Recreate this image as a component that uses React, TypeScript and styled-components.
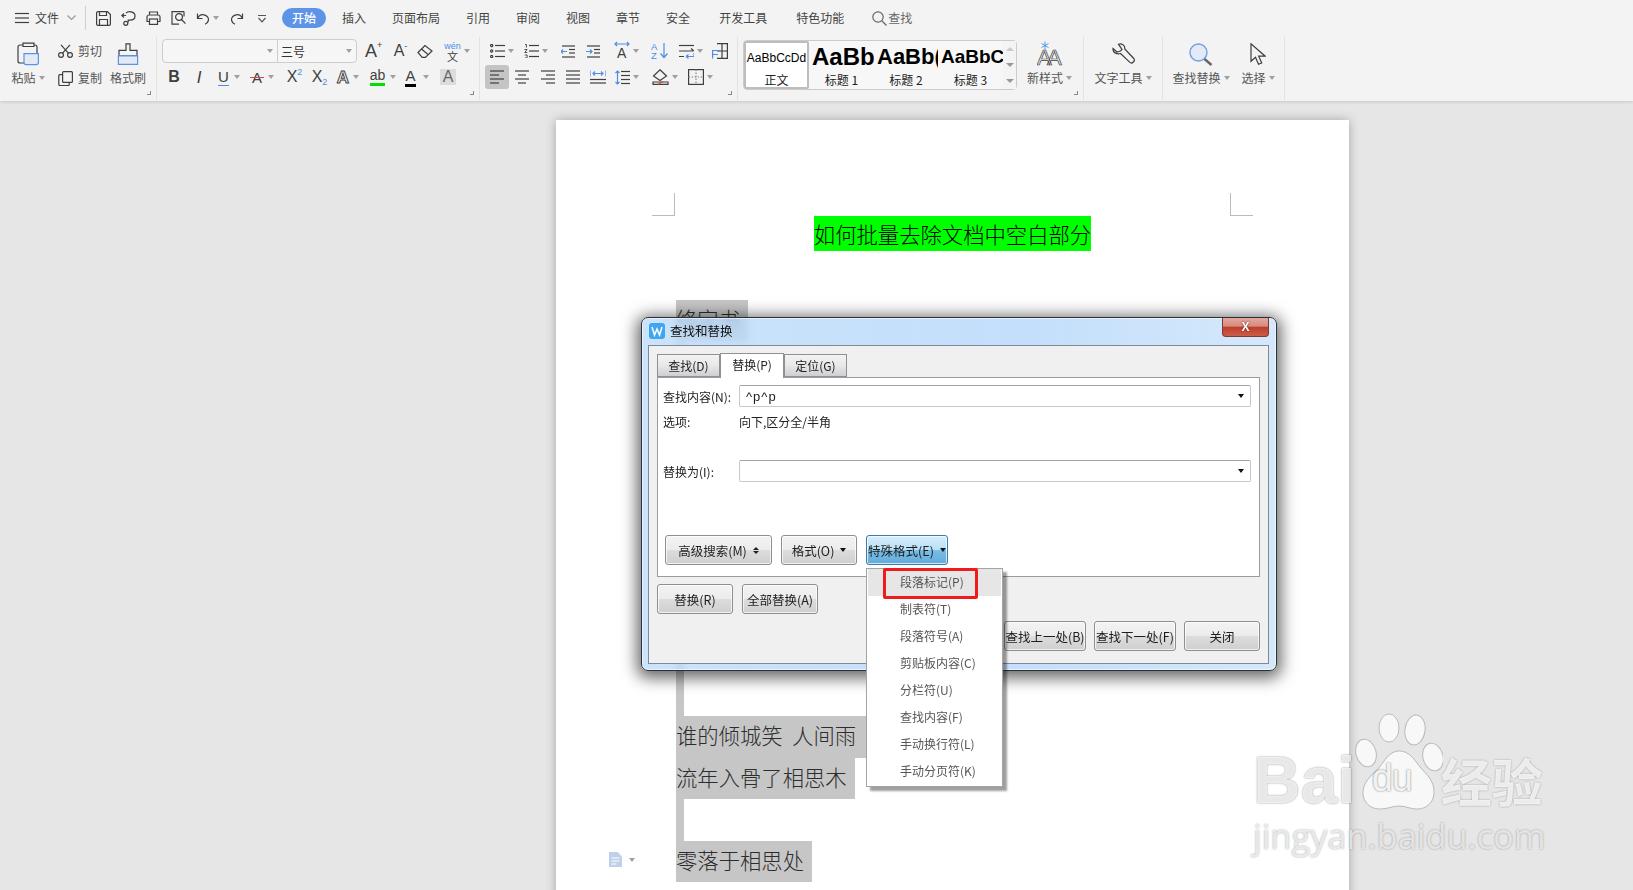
import React from 'react'
import styled, { createGlobalStyle } from 'styled-components'

const UI_FONT = `"Noto Sans CJK SC", "Liberation Sans", sans-serif`
const LATIN = `"Liberation Sans", "Noto Sans CJK SC", sans-serif`
const INK = '#3f3f3f'
const BLUE = '#4f8de6'

const GlobalStyle = createGlobalStyle`
  html, body { margin: 0; padding: 0; height: 100%; overflow: hidden; }
  body { font-family: ${UI_FONT}; font-size: 12px; color: #444; }
  #root { height: 100%; }
  * { box-sizing: border-box; }
`

const Stage = styled.div`
  position: relative;
  height: 100vh;
  display: flex;
  flex-direction: column;
  overflow: hidden;
  background: #e6e6e6;
`

const Ribbon = styled.header`
  flex: none;
  height: 101px;
  background: #f3f3f3;
  box-shadow: 0 1px 3px rgba(0, 0, 0, 0.14);
  position: relative;
  z-index: 2;
`

const TopBar = styled.div`
  height: 36px;
  display: flex;
  align-items: center;
  padding-left: 15px;
`

const FileLabel = styled.span`
  margin: 0 8px 0 6px;
  line-height: 16px;
`

const TopSeparator = styled.i`
  width: 1px;
  height: 24px;
  background: #cfcfcf;
  margin: 0 5px 0 9px;
`

const Pill = styled.span`
  width: 44px;
  height: 20px;
  margin-left: 8px;
  border-radius: 10px;
  background: #5d94e8;
  color: #fff;
  font-weight: 500;
  text-align: center;
  line-height: 20px;
`

const NavItem = styled.span<{ $ml?: number; $muted?: boolean }>`
  margin-left: ${(p) => p.$ml ?? 26}px;
  color: ${(p) => (p.$muted ? '#666' : '#444')};
  white-space: nowrap;
  line-height: 16px;
`

const SearchIcon = styled.span`
  display: flex;
  margin-left: 28px;
  margin-right: 1px;
`

const Tool = styled.span<{ $w: number; $active?: boolean }>`
  flex: none;
  width: ${(p) => p.$w}px;
  height: 24px;
  display: flex;
  align-items: center;
  justify-content: center;
  border-radius: 3px;
  background: ${(p) => (p.$active ? '#c4c4c4' : 'transparent')};
`

const Caret = styled.i<{ $gap?: number }>`
  flex: none;
  display: inline-block;
  width: 0;
  height: 0;
  margin-left: ${(p) => p.$gap ?? 3}px;
  border-style: solid;
  border-width: 4px 3px 0;
  border-color: #a0a0a0 transparent transparent;
  vertical-align: middle;
`

const Tools = styled.div`
  height: 65px;
  display: flex;
`

const Group = styled.section<{ $w: number; $pad?: number }>`
  position: relative;
  flex: none;
  width: ${(p) => p.$w}px;
  height: 63px;
  margin-top: 1px;
  padding: 2px 0 0 ${(p) => p.$pad ?? 0}px;
  border-right: 1px solid #e2e2e2;
  display: flex;
`

const Launcher = styled.i`
  position: absolute;
  right: 5px;
  bottom: 5px;
  width: 4px;
  height: 4px;
  border-right: 1px solid #888;
  border-bottom: 1px solid #888;
`

const Stack = styled.div`
  display: flex;
  flex-direction: column;
  gap: 2px;
`

const Row = styled.div`
  height: 24px;
  display: flex;
  align-items: center;
`

const BigButton = styled.div<{ $w: number }>`
  flex: none;
  width: ${(p) => p.$w}px;
  padding-top: 3px;
  display: flex;
  flex-direction: column;
  align-items: center;
`

const BigIcon = styled.span`
  height: 24px;
  display: flex;
  align-items: center;
  justify-content: center;
`

const BigLabel = styled.span`
  margin-top: 4px;
  display: flex;
  align-items: center;
  line-height: 16px;
  color: #555;
  white-space: nowrap;
`

const SmallColumn = styled.div`
  flex: none;
  width: 60px;
  padding: 5px 0 0 10px;
  display: flex;
  flex-direction: column;
  gap: 13px;
`

const SmallButton = styled.div`
  height: 14px;
  display: flex;
  align-items: center;
  gap: 5px;
  color: #555;
  line-height: 14px;
`

const Combo = styled.div`
  flex: none;
  width: 195px;
  height: 24px;
  border: 1px solid #cdcdcd;
  border-radius: 4px;
  background: #f6f6f6;
  display: flex;
`

const ComboPart = styled.div<{ $w: number; $divider?: boolean }>`
  width: ${(p) => p.$w}px;
  display: flex;
  align-items: center;
  justify-content: space-between;
  padding: 0 4px 0 3px;
  border-right: ${(p) => (p.$divider ? '1px solid #cdcdcd' : 'none')};
  color: #333;
`

const Letter = styled.span<{ $size?: number; $weight?: number; $color?: string; $italic?: boolean }>`
  position: relative;
  display: inline-block;
  font-family: ${LATIN};
  font-size: ${(p) => p.$size ?? 16}px;
  font-weight: ${(p) => p.$weight ?? 400};
  font-style: ${(p) => (p.$italic ? 'italic' : 'normal')};
  color: ${(p) => p.$color ?? INK};
  line-height: 1;
`

const SuperMark = styled.sup<{ $blue?: boolean; $low?: boolean }>`
  position: absolute;
  left: 100%;
  top: ${(p) => (p.$low ? 'auto' : '-2px')};
  bottom: ${(p) => (p.$low ? '-2px' : 'auto')};
  font-size: 9px;
  line-height: 10px;
  color: ${(p) => (p.$blue ? BLUE : INK)};
`

const UnderLetter = styled(Letter)`
  padding-bottom: 1px;
  border-bottom: 1px solid ${BLUE};
`

const StruckLetter = styled(Letter)`
  &::after {
    content: '';
    position: absolute;
    left: -2px;
    right: -2px;
    top: 7px;
    height: 1px;
    background: #d9453d;
  }
`

const OutlineLetter = styled(Letter)`
  color: #fff;
  -webkit-text-stroke: 1px ${INK};
  font-weight: 700;
`

const BarLetter = styled(Letter)<{ $bar: string }>`
  padding-bottom: 1px;
  border-bottom: 3px solid ${(p) => p.$bar};
`

const ShadedLetter = styled(Letter)`
  width: 16px;
  height: 16px;
  background: #dcdcdc;
  color: #666;
  text-align: center;
`

const WenMark = styled.span`
  display: flex;
  flex-direction: column;
  align-items: center;
  font-family: ${LATIN};
  font-size: 9px;
  line-height: 9px;
  color: ${BLUE};
`

const WenChar = styled.span`
  font-family: ${UI_FONT};
  font-size: 11px;
  line-height: 10px;
  color: ${INK};
`

const Gallery = styled.div`
  flex: none;
  width: 274px;
  height: 50px;
  margin: 1px 8px 0 5px;
  border: 1px solid #cbcbcb;
  border-radius: 4px;
  background: #f7f7f7;
  display: flex;
`

const StyleCard = styled.div<{ $w: number; $selected?: boolean }>`
  flex: none;
  width: ${(p) => p.$w}px;
  height: ${(p) => (p.$selected ? '48px' : 'auto')};
  overflow: hidden;
  text-align: center;
  background: ${(p) => (p.$selected ? '#fff' : 'transparent')};
  border: ${(p) => (p.$selected ? '2px solid #bdbdbd' : 'none')};
  border-radius: 2px;
  color: #111;
`

const StyleSample = styled.div<{ $size: number; $bold?: boolean }>`
  height: ${(p) => (p.$bold ? 31 : 29)}px;
  padding-left: ${(p) => (p.$bold ? 3 : 0)}px;
  display: flex;
  align-items: center;
  justify-content: ${(p) => (p.$bold ? 'flex-start' : 'center')};
  font-family: ${LATIN};
  font-size: ${(p) => p.$size}px;
  font-weight: ${(p) => (p.$bold ? 700 : 400)};
  color: #000;
  white-space: nowrap;
`

const StyleName = styled.div`
  line-height: 15px;
  color: #222;
`

const GalleryScroll = styled.div`
  flex: none;
  width: 13px;
  display: flex;
  flex-direction: column;
  background: #f4f4f4;
`

const ScrollCell = styled.span`
  flex: 1;
  display: flex;
  align-items: center;
  justify-content: center;
`

const ScrollArrow = styled.i<{ $up?: boolean }>`
  width: 0;
  height: 0;
  border-style: solid;
  border-width: ${(p) => (p.$up ? '0 4px 4px' : '4px 4px 0')};
  border-color: ${(p) => (p.$up ? 'transparent transparent #c9c9c9' : '#999 transparent transparent')};
`

/* document */
const Workspace = styled.main`
  flex: 1;
  min-height: 0;
  overflow: hidden;
  padding: 19px 0 0 556px;
`

const Page = styled.article`
  position: relative;
  width: 793px;
  height: 900px;
  background: #fff;
  box-shadow: 0 0 10px rgba(0, 0, 0, 0.28);
`

const CropRow = styled.div`
  display: flex;
  justify-content: space-between;
  padding: 73px 96px 0;
`

const CropMark = styled.i<{ $right?: boolean }>`
  width: 23px;
  height: 23px;
  border-bottom: 1px solid #bbb;
  ${(p) => (p.$right ? 'border-left: 1px solid #bbb;' : 'border-right: 1px solid #bbb;')}
`

const DocTitle = styled.div`
  height: 35px;
  margin-bottom: 49px;
  text-align: center;
  font-size: 21.33px;
  font-weight: 300;
  line-height: 35px;
  color: #000;
`

const TitleMark = styled.span`
  display: inline-block;
  background: #00ff00;
`

const Body = styled.div`
  padding-left: 120px;
`

const DocLine = styled.div`
  height: 41.6px;
`

const Mark = styled.span`
  display: inline-block;
  height: 100%;
  padding-right: 8px;
  background: #c6c6c6;
  color: #2d2d2d;
  font-size: 21.33px;
  font-weight: 300;
  line-height: 38px;
  white-space: pre;
`

const PageBadge = styled.span`
  position: absolute;
  left: 53px;
  top: 732px;
  display: flex;
  align-items: center;
  gap: 4px;
`

/* dialog */
const Dialog = styled.div`
  position: absolute;
  z-index: 3;
  left: 641px;
  top: 317px;
  width: 636px;
  height: 354px;
  padding: 0 7px 6px 6px;
  border: 1px solid #2b3036;
  border-radius: 7px;
  background: linear-gradient(90deg, rgba(190, 220, 250, 0.8), rgba(178, 214, 250, 0.78) 60%, rgba(205, 228, 250, 0.84));
  backdrop-filter: blur(3px);
  box-shadow: 0 3px 16px 4px rgba(0, 0, 0, 0.6), inset 0 0 0 1px rgba(255, 255, 255, 0.55);
  display: flex;
  flex-direction: column;
`

const TitleBar = styled.div`
  flex: none;
  height: 27px;
  display: flex;
  align-items: flex-start;
`

const TitleIcon = styled.span`
  margin: 5px 0 0 1px;
  display: flex;
`

const TitleText = styled.span`
  margin: 4px 0 0 5px;
  line-height: 18px;
  color: #111;
  font-size: 12.5px;
`

const CloseButton = styled.span`
  margin-left: auto;
  width: 47px;
  height: 19px;
  border: 1px solid #7d3a34;
  border-top: none;
  border-radius: 0 0 4px 4px;
  background: linear-gradient(#e2a79f, #d88b7f 45%, #bd3f2c 52%, #cc5d49);
  display: flex;
  align-items: center;
  justify-content: center;
  color: #fff;
  font-family: ${LATIN};
  font-size: 12px;
  font-weight: 700;
  text-shadow: 0 0 2px #5b1c14;
`

const DialogBody = styled.div`
  flex: 1;
  padding: 8px 8px 0;
  border: 1px solid #7f8a99;
  background: #f0f0f0;
  color: #222;
`

const TabStrip = styled.div`
  height: 23px;
  display: flex;
  align-items: flex-end;
`

const Tab = styled.span<{ $active?: boolean }>`
  position: relative;
  width: ${(p) => (p.$active ? '64px' : '63px')};
  height: ${(p) => (p.$active ? '25px' : '23px')};
  margin-bottom: ${(p) => (p.$active ? '-1px' : '0')};
  border: 1px solid #8f8f98;
  border-bottom: ${(p) => (p.$active ? 'none' : '1px solid #8f8f98')};
  background: ${(p) => (p.$active ? '#fff' : 'linear-gradient(#f3f3f3, #e8e8e8 50%, #cfcfcf)')};
  z-index: ${(p) => (p.$active ? 1 : 0)};
  text-align: center;
  line-height: 22px;
`

const TabPanel = styled.div`
  height: 200px;
  padding: 7px 8px 0 5px;
  border: 1px solid #9a9aa5;
  background: #fff;
`

const FieldRow = styled.div<{ $mt?: number; $h?: number }>`
  margin-top: ${(p) => p.$mt ?? 0}px;
  height: ${(p) => p.$h ?? 22}px;
  display: flex;
  align-items: center;
`

const FieldLabel = styled.span`
  flex: none;
  width: 76px;
  white-space: nowrap;
  color: #222;
`

const Field = styled.div`
  flex: 1;
  height: 22px;
  padding: 0 6px;
  border: 1px solid #c7c7d0;
  border-top-color: #a3a3ad;
  border-radius: 2px;
  display: flex;
  align-items: center;
  justify-content: space-between;
  font-family: ${LATIN};
  font-size: 13px;
  letter-spacing: 1px;
`

const BlackCaret = styled.i`
  flex: none;
  width: 0;
  height: 0;
  border-style: solid;
  border-width: 4px 3.5px 0;
  border-color: #111 transparent transparent;
`

const ButtonRow = styled.div<{ $end?: boolean; $mt?: number; $gap?: number; $ml?: number }>`
  margin-top: ${(p) => p.$mt ?? 7}px;
  margin-left: ${(p) => p.$ml ?? 0}px;
  height: 30px;
  display: flex;
  gap: ${(p) => p.$gap ?? 9}px;
  justify-content: ${(p) => (p.$end ? 'flex-end' : 'flex-start')};
`

const Button = styled.span<{ $w: number; $active?: boolean }>`
  flex: none;
  width: ${(p) => p.$w}px;
  height: 30px;
  display: flex;
  align-items: center;
  justify-content: center;
  gap: 6px;
  border: 1px solid ${(p) => (p.$active ? '#3a7cae' : '#8f8f8f')};
  border-radius: 3px;
  background: ${(p) =>
    p.$active
      ? 'linear-gradient(#d7eefb, #b9e0f6 48%, #79bde6 52%, #62abd9)'
      : 'linear-gradient(#f3f3f3, #ececec 48%, #dcdcdc 52%, #cfcfcf)'};
  box-shadow: inset 0 0 0 1px rgba(255, 255, 255, 0.7);
  color: #1d1d1d;
  font-size: 12.5px;
  white-space: nowrap;
`

const DoubleCaret = styled.span`
  display: flex;
  flex-direction: column;
  gap: 1px;
`

const TinyUp = styled.i`
  width: 0;
  height: 0;
  border-style: solid;
  border-width: 0 3px 3px;
  border-color: transparent transparent #222;
`

const TinyDown = styled.i`
  width: 0;
  height: 0;
  border-style: solid;
  border-width: 3px 3px 0;
  border-color: #222 transparent transparent;
`

const Menu = styled.ul`
  position: absolute;
  z-index: 4;
  left: 866px;
  top: 568px;
  width: 137px;
  margin: 0;
  padding: 0 1px 1px;
  list-style: none;
  border: 1px solid #a3a3a3;
  background: #fff;
  box-shadow: 4px 4px 2px rgba(0, 0, 0, 0.38);
`

const MenuItem = styled.li<{ $hot?: boolean }>`
  position: relative;
  height: 27px;
  padding-left: 32px;
  line-height: 26px;
  background: ${(p) => (p.$hot ? '#e6e6e6' : 'transparent')};
  color: #555;
`

const RedBox = styled.span`
  position: absolute;
  left: 15px;
  top: -1px;
  width: 95px;
  height: 31px;
  border: 3px solid #ee1c1c;
  border-radius: 2px;
`

/* watermark */
const Watermark = styled.div`
  position: absolute;
  z-index: 5;
  left: 1253px;
  top: 713px;
  width: 300px;
  pointer-events: none;
`

const WatermarkTop = styled.div`
  height: 97px;
  display: flex;
  align-items: flex-end;
`

const WmBai = styled.span`
  font-family: ${LATIN};
  font-size: 66px;
  font-weight: 700;
  line-height: 60px;
  color: rgba(255, 255, 255, 0.8);
  text-shadow: 0 0 2px rgba(0, 0, 0, 0.45);
`

const Paw = styled.span`
  position: relative;
  flex: none;
  width: 86px;
  height: 97px;
  margin-left: -1px;
`

const PawDu = styled.span`
  position: absolute;
  left: 17px;
  top: 46px;
  font-family: ${LATIN};
  font-size: 38px;
  line-height: 38px;
  letter-spacing: -1px;
  color: #f2f2f2;
  text-shadow: 0 0 2px rgba(0, 0, 0, 0.55);
`

const WmCjk = styled.span`
  font-size: 51px;
  font-weight: 700;
  line-height: 60px;
  color: rgba(255, 255, 255, 0.82);
  text-shadow: 0 0 2px rgba(0, 0, 0, 0.35);
  white-space: nowrap;
`

const WmUrl = styled.div`
  margin-top: 6px;
  font-family: "Open Sans", ${LATIN};
  font-size: 34.4px;
  line-height: 40px;
  color: rgba(255, 255, 255, 0.72);
  text-shadow: 0 0 2px rgba(0, 0, 0, 0.38);
  white-space: nowrap;
`

/* drawn icons */
const Glyph = styled.svg`
  display: block;
  flex: none;
  fill: none;
  stroke: ${INK};
  stroke-width: 1.2;
`

const Ico = ({ w, h, children }: { w: number; h: number; children: React.ReactNode }) => (
  <Glyph width={w} height={h} viewBox={`0 0 ${w} ${h}`}>
    {children}
  </Glyph>
)

const Lines = ({ rows }: { rows: [number, number, number][] }) => (
  <>
    {rows.map(([x1, x2, y]) => (
      <line key={`${x1}${y}`} x1={x1} x2={x2} y1={y} y2={y} />
    ))}
  </>
)

const Hamburger = () => (
  <Ico w={14} h={12}>
    <Lines rows={[[0, 14, 1.5], [0, 14, 6], [0, 14, 10.5]]} />
  </Ico>
)
const Chevron = () => (
  <Ico w={9} h={6}>
    <path d="M.5.5 4.5 4.5 8.5.5" stroke="#999" />
  </Ico>
)
const SaveIcon = () => (
  <Ico w={15} h={15}>
    <path d="M2 .6h9.5L14.4 3.5V13a1.4 1.4 0 0 1-1.4 1.4H2A1.4 1.4 0 0 1 .6 13V2A1.4 1.4 0 0 1 2 .6Z" />
    <path d="M3.5 14.4V8.5h8v5.9M3.5 .6V4.5h7V.6" />
  </Ico>
)
const SaveAllIcon = () => (
  <Ico w={15} h={15}>
    <path d="M5 4.5H1M3 2.5l-2.2 2 2.2 2" />
    <path d="M5 2.2C6 1 8 .5 10 .8c2.6.5 4.2 2.4 4 4.6-.2 2.4-2.2 3.8-5 3.8H7.2v2.3" />
    <circle cx="4.8" cy="12.3" r="2" />
  </Ico>
)
const PrintIcon = () => (
  <Ico w={15} h={14}>
    <path d="M3.5 4V1h8v3M3.5 10.5H1V6a2 2 0 0 1 2-2h9a2 2 0 0 1 2 2v4.5h-2.5" />
    <rect x="3.5" y="8" width="8" height="5.4" />
  </Ico>
)
const PreviewIcon = () => (
  <Ico w={15} h={14}>
    <path d="M13 .6H1v12.6h7" />
    <circle cx="8" cy="6" r="3.4" />
    <path d="M10.5 8.5l4 4.2M13 .6v5" />
  </Ico>
)
const UndoIcon = ({ flip }: { flip?: boolean }) => (
  <Ico w={14} h={13}>
    <path
      d="M1.5 1.5v5h5M1.8 6.3C3 3.5 5.5 2.3 8 2.8c3 .6 5 3 4.4 5.7-.4 1.8-1.6 3-3.4 3.7"
      transform={flip ? 'matrix(-1 0 0 1 14 0)' : undefined}
    />
  </Ico>
)
const QuickIcon = () => (
  <Ico w={8} h={9}>
    <path d="M0 1.5h8M.5 4l3.5 3.8L7.5 4" stroke="#555" />
  </Ico>
)
const Magnifier = () => (
  <Ico w={15} h={15}>
    <circle cx="6" cy="6" r="5.2" stroke="#666" />
    <path d="M10 10l4.5 4.5" stroke="#666" />
  </Ico>
)
const PasteIcon = () => (
  <Ico w={23} h={24}>
    <path d="M6 3H3a2 2 0 0 0-2 2v14a2 2 0 0 0 2 2h4M17 3h1a2 2 0 0 1 2 2v6" />
    <path d="M6 1.2h11v3.3H6z" />
    <path d="M7 11.6h14.4v9a2 2 0 0 1-2 2H9a2 2 0 0 1-2-2z" fill="#e3eaf5" stroke="#5b93e6" />
  </Ico>
)
const ScissorsIcon = () => (
  <Ico w={15} h={14}>
    <circle cx="3" cy="11" r="2.4" />
    <circle cx="12" cy="11" r="2.4" />
    <path d="M4.6 9.2 12 .8M10.4 9.2 3 .8" />
  </Ico>
)
const CopyIcon = () => (
  <Ico w={15} h={15}>
    <rect x="4.6" y=".6" width="9.8" height="10.8" rx="1" />
    <path d="M4.6 3.6H1.8a1 1 0 0 0-1 1v9a1 1 0 0 0 1 1h8.400a1 1 0 0 0 1-1v-2" />
  </Ico>
)
const BrushIcon = () => (
  <Ico w={22} h={22}>
    <path d="M9 .8h4v6.600h7v5.400H2V7.400h7z" />
    <path d="M1.400 12.800h19.200v8.600H1.400z" fill="#e3eaf5" stroke="#5b93e6" />
  </Ico>
)
const EraserIcon = () => (
  <Ico w={16} h={15}>
    <path d="M1 8.500 8 1.500l7 5.500-6.600 6.400H5.200z" />
    <path d="M4.500 5 11 10.500" />
  </Ico>
)
const ListIcon = ({ numbered }: { numbered?: boolean }) => (
  <Ico w={15} h={14}>
    <Lines rows={[[5, 15, 1.5], [5, 15, 7], [5, 15, 12.5]]} />
    {numbered ? (
      <path d="M1 .5h1.400v3M.5 5.500h2.600L.7 8.500h2.600M.8 11h2.400L3 14H.8" strokeWidth=".9" />
    ) : (
      <>
        <circle cx="1.7" cy="1.5" r="1.1" />
        <circle cx="1.7" cy="7" r="1.1" />
        <circle cx="1.7" cy="12.5" r="1.1" />
      </>
    )}
  </Ico>
)
const IndentIcon = ({ inward }: { inward?: boolean }) => (
  <Ico w={15} h={13}>
    <Lines rows={[[1, 14, 1], [8, 14, 4.5], [8, 14, 8], [1, 14, 12]]} />
    <path d={inward ? 'M0 6.500h6M4 4.500l2 2-2 2' : 'M6 6.500H0M2 4.500l-2 2 2 2'} stroke={BLUE} />
  </Ico>
)
const SpacingAIcon = () => (
  <Ico w={16} h={20}>
    <path d="M1 3h14M3 1 1 3l2 2M13 1l2 2-2 2" stroke={BLUE} />
    <text x="3" y="17" fontFamily="Liberation Sans" fontSize="14" fill={INK} stroke="none">A</text>
  </Ico>
)
const SortIcon = () => (
  <Ico w={18} h={18}>
    <text x="0" y="8" fontFamily="Liberation Sans" fontSize="9.500" fill={BLUE} stroke="none">A</text>
    <text x="0" y="16.500" fontFamily="Liberation Sans" fontSize="9.500" fill={BLUE} stroke="none">Z</text>
    <path d="M13 1v14M9.500 11.500 13 15.500l3.500-4" stroke={BLUE} />
  </Ico>
)
const SwapIcon = () => (
  <Ico w={15} h={15}>
    <Lines rows={[[0, 15, 1.5]]} />
    <path d="M0 7h14M15 7l-3-2.500M0 12.500h5" />
    <path d="M7 12.500h8M7 12.500l2.500-2M7 12.500l2.500 2M15 12.500V9" stroke={BLUE} />
  </Ico>
)
const TableIcon = () => (
  <Ico w={16} h={16}>
    <path d="M5 .6h10.400V15.400H5M10 .6v14.800M5 8h10.400" />
    <path d="M.6 15.400V7.500H8M.6 11.500h5.400" stroke={BLUE} />
  </Ico>
)
const AlignIcon = ({ mode }: { mode: 'left' | 'center' | 'right' | 'full' }) => {
  const rows: Record<typeof mode, [number, number, number][]> = {
    left: [[0, 14, 1], [0, 9, 5], [0, 14, 9], [0, 9, 13]],
    center: [[0, 14, 1], [3, 11, 5], [0, 14, 9], [3, 11, 13]],
    right: [[0, 14, 1], [5, 14, 5], [0, 14, 9], [5, 14, 13]],
    full: [[0, 14, 1], [0, 14, 5], [0, 14, 9], [0, 14, 13]],
  }
  return (
    <Ico w={14} h={14}>
      <Lines rows={rows[mode]} />
    </Ico>
  )
}
const DistributeIcon = () => (
  <Ico w={16} h={14}>
    <Lines rows={[[0, 16, 9.5], [0, 16, 13]]} />
    <path d="M0 .5v6M16 .5v6M3 3.500h10M5 1.500l-2 2 2 2M11 1.500l2 2-2 2" stroke={BLUE} />
  </Ico>
)
const LineSpacingIcon = () => (
  <Ico w={15} h={15}>
    <Lines rows={[[6, 15, 1.5], [6, 15, 5.5], [6, 15, 9.5], [6, 15, 13.5]]} />
    <path d="M2.500 1v13M.5 3l2-2 2 2M.5 12l2 2 2-2" stroke={BLUE} />
  </Ico>
)
const FillIcon = () => (
  <Ico w={17} h={16}>
    <path d="M8 .8 14.500 7 8 11.500 1.500 7z" />
    <path d="M1 13h15v2.400H1z" />
    <path d="M6 15.400 11 12.500" stroke="#d9453d" />
  </Ico>
)
const BordersIcon = () => (
  <Ico w={16} h={16}>
    <rect x=".6" y=".6" width="14.800" height="14.800" />
    <path d="M8 .6v14.800M.6 8h14.800" strokeDasharray="1.500 1.500" stroke="#888" />
  </Ico>
)
const NewStyleIcon = () => (
  <Ico w={26} h={26}>
    <path d="M8 .5v8M4.500 2.500l7 4M11.500 2.500l-7 4" stroke={BLUE} strokeWidth=".9" />
    <text x="0" y="23.500" fontFamily="Liberation Sans" fontSize="22" fill="none" strokeWidth=".7">A</text>
    <text x="10" y="23.500" fontFamily="Liberation Sans" fontSize="22" fill="none" strokeWidth=".7">A</text>
  </Ico>
)
const WrenchIcon = () => (
  <Ico w={23} h={23}>
    <path d="M1 5.500 5 9l3.500-1 1.500-1.500L6.500 1.200c3-1 6.800.7 6.300 4.800l9 9.500c.8 1 .6 2.500-.4 3.500s-2.400 1.300-3.500.4L8.500 10.500c-4 1.200-8-1.200-7.500-5Z" />
  </Ico>
)
const FindReplaceIcon = () => (
  <Ico w={24} h={23}>
    <circle cx="9.500" cy="9.500" r="8.500" fill="#e3eaf5" stroke="#6f9fe8" strokeWidth="1.400" />
    <path d="M15.500 16l7 6" strokeWidth="2.400" stroke="#666" />
  </Ico>
)
const CursorIcon = () => (
  <Ico w={16} h={23}>
    <path d="M1 .8v17.500l4.500-4 3 7 3.200-1.300-3-6.800h6.500z" />
  </Ico>
)
const DocSmallIcon = () => (
  <Ico w={13} h={15}>
    <path d="M0 0h8.500L13 4.500V15H0z" fill="#bfd0ea" stroke="none" />
    <path d="M2.500 6h8M2.500 9h8M2.500 12h5" stroke="#fff" />
  </Ico>
)
const AppLogo = () => (
  <Ico w={16} h={16}>
    <rect width="16" height="16" rx="3" fill="#3fa6f2" stroke="none" />
    <path d="M3 4l2.500 8L8 6l2.500 6L13 4" stroke="#fff" strokeWidth="1.500" />
  </Ico>
)
const PawIcon = () => (
  <svg width="88" height="97" viewBox="0 0 88 97" fill="#f8f8f8" stroke="rgba(0,0,0,.22)" strokeWidth="1">
    <ellipse cx="11" cy="40" rx="10" ry="14" transform="rotate(-15 11 40)" />
    <ellipse cx="34" cy="15" rx="10" ry="14" />
    <ellipse cx="60" cy="17" rx="10" ry="15" transform="rotate(8 60 17)" />
    <ellipse cx="78" cy="44" rx="10" ry="14" transform="rotate(-15 78 44)" />
    <path d="M44 38c10 0 15 8 21 16 6 7 14 13 14 25 0 11-8 17-17 17-7 0-11-3-18-3s-11 3-19 3C15 96 8 89 8 80c0-11 8-17 15-24 6-7 11-18 21-18Z" />
  </svg>
)

const styleCards = [
  { name: '标题 1', sample: 'AaBb', size: 24, w: 65 },
  { name: '标题 2', sample: 'AaBb(', size: 22, w: 64 },
  { name: '标题 3', sample: 'AaBbC', size: 19, w: 65 },
]
const menuItems = ['段落标记(P)', '制表符(T)', '段落符号(A)', '剪贴板内容(C)', '分栏符(U)', '查找内容(F)', '手动换行符(L)', '手动分页符(K)']
const navItems: [string, number?][] = [
  ['插入', 16],
  ['页面布局'],
  ['引用'],
  ['审阅'],
  ['视图'],
  ['章节'],
  ['安全'],
  ['开发工具', 29],
  ['特色功能', 29],
]

export default function App() {
  return (
    <Stage>
      <GlobalStyle />
      <Ribbon>
        <TopBar>
          <Hamburger />
          <FileLabel>文件</FileLabel>
          <Chevron />
          <TopSeparator />
          <Tool $w={25}><SaveIcon /></Tool>
          <Tool $w={25}><SaveAllIcon /></Tool>
          <Tool $w={25}><PrintIcon /></Tool>
          <Tool $w={25}><PreviewIcon /></Tool>
          <Tool $w={32}><UndoIcon /><Caret /></Tool>
          <Tool $w={27}><UndoIcon flip /></Tool>
          <Tool $w={24}><QuickIcon /></Tool>
          <Pill>开始</Pill>
          {navItems.map(([label, ml]) => (
            <NavItem key={label} $ml={ml}>{label}</NavItem>
          ))}
          <SearchIcon><Magnifier /></SearchIcon>
          <NavItem $ml={0} $muted>查找</NavItem>
        </TopBar>
        <Tools>
          <Group $w={157} $pad={8}>
            <BigButton $w={40}>
              <BigIcon><PasteIcon /></BigIcon>
              <BigLabel>粘贴<Caret /></BigLabel>
            </BigButton>
            <SmallColumn>
              <SmallButton><ScissorsIcon />剪切</SmallButton>
              <SmallButton><CopyIcon />复制</SmallButton>
            </SmallColumn>
            <BigButton $w={40}>
              <BigIcon><BrushIcon /></BigIcon>
              <BigLabel>格式刷</BigLabel>
            </BigButton>
            <Launcher />
          </Group>
          <Group $w={323} $pad={5}>
            <Stack>
              <Row>
                <Combo>
                  <ComboPart $w={115} $divider><span /><Caret /></ComboPart>
                  <ComboPart $w={78}>三号<Caret /></ComboPart>
                </Combo>
                <Tool $w={28}><Letter $size={18}>A<SuperMark>+</SuperMark></Letter></Tool>
                <Tool $w={28}><Letter $size={16}>A<SuperMark>-</SuperMark></Letter></Tool>
                <Tool $w={24}><EraserIcon /></Tool>
                <Tool $w={40}>
                  <WenMark>wén<WenChar>文</WenChar></WenMark>
                  <Caret />
                </Tool>
              </Row>
              <Row>
                <Tool $w={24}><Letter $size={16} $weight={700}>B</Letter></Tool>
                <Tool $w={26}><Letter $size={17} $italic>I</Letter></Tool>
                <Tool $w={34}><UnderLetter $size={15}>U</UnderLetter><Caret $gap={5} /></Tool>
                <Tool $w={34}><StruckLetter $size={15}>A</StruckLetter><Caret $gap={6} /></Tool>
                <Tool $w={24}><Letter $size={16}>X<SuperMark $blue>2</SuperMark></Letter></Tool>
                <Tool $w={26}><Letter $size={16}>X<SuperMark $blue $low>2</SuperMark></Letter></Tool>
                <Tool $w={36}><OutlineLetter $size={17}>A</OutlineLetter><Caret $gap={4} /></Tool>
                <Tool $w={34}><BarLetter $size={14} $bar="#00e000">ab</BarLetter><Caret $gap={5} /></Tool>
                <Tool $w={34}><BarLetter $size={15} $bar="#000">A</BarLetter><Caret $gap={7} /></Tool>
                <Tool $w={28}><ShadedLetter $size={16}>A</ShadedLetter></Tool>
              </Row>
            </Stack>
            <Launcher />
          </Group>
          <Group $w={258} $pad={5}>
            <Stack>
              <Row>
                <Tool $w={34}><ListIcon /><Caret /></Tool>
                <Tool $w={34}><ListIcon numbered /><Caret /></Tool>
                <Tool $w={30}><IndentIcon /></Tool>
                <Tool $w={20}><IndentIcon inward /></Tool>
                <Tool $w={46}><SpacingAIcon /><Caret /></Tool>
                <Tool $w={21}><SortIcon /></Tool>
                <Tool $w={42}><SwapIcon /><Caret /></Tool>
                <Tool $w={16}><TableIcon /></Tool>
              </Row>
              <Row>
                <Tool $w={24} $active><AlignIcon mode="left" /></Tool>
                <Tool $w={26}><AlignIcon mode="center" /></Tool>
                <Tool $w={25}><AlignIcon mode="right" /></Tool>
                <Tool $w={25}><AlignIcon mode="full" /></Tool>
                <Tool $w={25}><DistributeIcon /></Tool>
                <Tool $w={34}><LineSpacingIcon /><Caret /></Tool>
                <Tool $w={42}><FillIcon /><Caret /></Tool>
                <Tool $w={28}><BordersIcon /><Caret /></Tool>
              </Row>
            </Stack>
            <Launcher />
          </Group>
          <Group $w={346}>
            <Gallery>
              <StyleCard $w={65} $selected>
                <StyleSample $size={12}>AaBbCcDd</StyleSample>
                <StyleName>正文</StyleName>
              </StyleCard>
              {styleCards.map((card) => (
                <StyleCard key={card.name} $w={card.w}>
                  <StyleSample $size={card.size} $bold>{card.sample}</StyleSample>
                  <StyleName>{card.name}</StyleName>
                </StyleCard>
              ))}
              <GalleryScroll>
                <ScrollCell><ScrollArrow $up /></ScrollCell>
                <ScrollCell><ScrollArrow /></ScrollCell>
                <ScrollCell><ScrollArrow /></ScrollCell>
              </GalleryScroll>
            </Gallery>
            <BigButton $w={49}>
              <BigIcon><NewStyleIcon /></BigIcon>
              <BigLabel>新样式<Caret /></BigLabel>
            </BigButton>
            <Launcher />
          </Group>
          <Group $w={79}>
            <BigButton $w={78}>
              <BigIcon><WrenchIcon /></BigIcon>
              <BigLabel>文字工具<Caret /></BigLabel>
            </BigButton>
          </Group>
          <Group $w={122} $pad={3}>
            <BigButton $w={70}>
              <BigIcon><FindReplaceIcon /></BigIcon>
              <BigLabel>查找替换<Caret /></BigLabel>
            </BigButton>
            <BigButton $w={44}>
              <BigIcon><CursorIcon /></BigIcon>
              <BigLabel>选择<Caret /></BigLabel>
            </BigButton>
          </Group>
        </Tools>
      </Ribbon>

      <Workspace>
        <Page>
          <CropRow>
            <CropMark />
            <CropMark $right />
          </CropRow>
          <DocTitle><TitleMark>如何批量去除文档中空白部分</TitleMark></DocTitle>
          <Body>
            <DocLine><Mark>终定书</Mark></DocLine>
            {Array.from({ length: 9 }, (_, i) => (
              <DocLine key={i}><Mark /></DocLine>
            ))}
            <DocLine><Mark>谁的倾城笑  人间雨    </Mark></DocLine>
            <DocLine><Mark>流年入骨了相思木</Mark></DocLine>
            <DocLine><Mark /></DocLine>
            <DocLine><Mark>零落于相思处</Mark></DocLine>
          </Body>
          <PageBadge><DocSmallIcon /><Caret /></PageBadge>
        </Page>
      </Workspace>

      <Dialog>
        <TitleBar>
          <TitleIcon><AppLogo /></TitleIcon>
          <TitleText>查找和替换</TitleText>
          <CloseButton>X</CloseButton>
        </TitleBar>
        <DialogBody>
          <TabStrip>
            <Tab>查找(D)</Tab>
            <Tab $active>替换(P)</Tab>
            <Tab>定位(G)</Tab>
          </TabStrip>
          <TabPanel>
            <FieldRow>
              <FieldLabel>查找内容(N):</FieldLabel>
              <Field>^p^p<BlackCaret /></Field>
            </FieldRow>
            <FieldRow $mt={6} $h={16}>
              <FieldLabel>选项:</FieldLabel>
              <span>向下,区分全/半角</span>
            </FieldRow>
            <FieldRow $mt={31}>
              <FieldLabel>替换为(I):</FieldLabel>
              <Field><span /><BlackCaret /></Field>
            </FieldRow>
            <ButtonRow $mt={53} $ml={2}>
              <Button $w={107}>高级搜索(M)<DoubleCaret><TinyUp /><TinyDown /></DoubleCaret></Button>
              <Button $w={76}>格式(O)<BlackCaret /></Button>
              <Button $w={82} $active>特殊格式(E)<BlackCaret /></Button>
            </ButtonRow>
          </TabPanel>
          <ButtonRow>
            <Button $w={76}>替换(R)</Button>
            <Button $w={76}>全部替换(A)</Button>
          </ButtonRow>
          <ButtonRow $end $gap={8}>
            <Button $w={82}>查找上一处(B)</Button>
            <Button $w={82}>查找下一处(F)</Button>
            <Button $w={76}>关闭</Button>
          </ButtonRow>
        </DialogBody>
      </Dialog>

      <Menu>
        {menuItems.map((item, i) => (
          <MenuItem key={item} $hot={i === 0}>
            {item}
            {i === 0 && <RedBox />}
          </MenuItem>
        ))}
      </Menu>

      <Watermark>
        <WatermarkTop>
          <WmBai>Bai</WmBai>
          <Paw>
            <PawIcon />
            <PawDu>du</PawDu>
          </Paw>
          <WmCjk>经验</WmCjk>
        </WatermarkTop>
        <WmUrl>jingyan.baidu.com</WmUrl>
      </Watermark>
    </Stage>
  )
}
